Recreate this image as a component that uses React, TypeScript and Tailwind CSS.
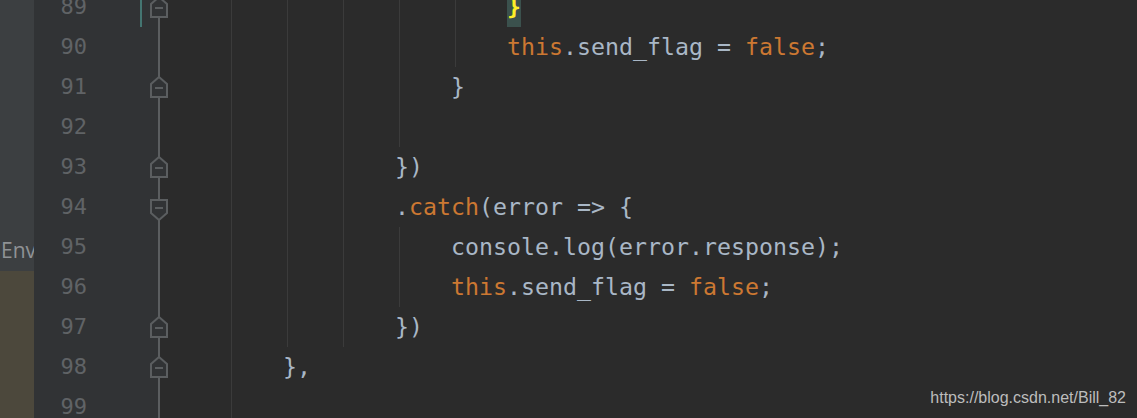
import React from "react";

type Tok = { t: string; k?: "kw" | "brace" };
type Row = {
  n: number;
  indent?: number;
  toks?: Tok[];
  guides: number[];
  fold?: "end" | "start";
  change?: boolean;
};

const rows: Row[] = [
  { n: 89, indent: 20, toks: [{ t: "}", k: "brace" }], guides: [0, 1, 2, 3, 4], fold: "end", change: true },
  {
    n: 90,
    indent: 20,
    toks: [{ t: "this", k: "kw" }, { t: ".send_flag = " }, { t: "false", k: "kw" }, { t: ";" }],
    guides: [0, 1, 2, 3, 4],
  },
  { n: 91, indent: 16, toks: [{ t: "}" }], guides: [0, 1, 2, 3], fold: "end" },
  { n: 92, guides: [0, 1, 2, 3] },
  { n: 93, indent: 12, toks: [{ t: "})" }], guides: [0, 1, 2], fold: "end" },
  {
    n: 94,
    indent: 12,
    toks: [{ t: "." }, { t: "catch", k: "kw" }, { t: "(error => {" }],
    guides: [0, 1, 2],
    fold: "start",
  },
  { n: 95, indent: 16, toks: [{ t: "console.log(error.response);" }], guides: [0, 1, 2, 3] },
  {
    n: 96,
    indent: 16,
    toks: [{ t: "this", k: "kw" }, { t: ".send_flag = " }, { t: "false", k: "kw" }, { t: ";" }],
    guides: [0, 1, 2, 3],
  },
  { n: 97, indent: 12, toks: [{ t: "})" }], guides: [0, 1, 2], fold: "end" },
  { n: 98, indent: 4, toks: [{ t: "}," }], guides: [0], fold: "end" },
  { n: 99, guides: [0] },
];

const guideLeft = ["left-[71px]", "left-[127px]", "left-[183px]", "left-[239px]", "left-[295px]"];

const mono = { fontFamily: '"DejaVu Sans Mono", monospace' };

function FoldMarker({ kind }: { kind: "end" | "start" }) {
  if (kind === "end") {
    return (
      <svg
        className="absolute left-[-8px] top-[9px]"
        width="18"
        height="22"
        viewBox="0 0 18 22"
      >
        <path d="M1 21 V8 L9 1 L17 8 V21 Z" fill="#313335" stroke="#5b5e60" strokeWidth="2" strokeLinejoin="miter" />
        <rect x="5" y="11" width="8" height="2" fill="#5b5e60" />
      </svg>
    );
  }
  return (
    <svg
      className="absolute left-[-8px] top-[12px]"
      width="18"
      height="22"
      viewBox="0 0 18 22"
    >
      <path d="M1 1 H17 V14 L9 21 L1 14 Z" fill="#313335" stroke="#5b5e60" strokeWidth="2" strokeLinejoin="miter" />
      <rect x="5" y="8" width="8" height="2" fill="#5b5e60" />
    </svg>
  );
}

export default function App() {
  return (
    <div className="relative flex h-[418px] w-[1137px] overflow-hidden bg-[#2b2b2b]">
      {/* left tool strip */}
      <div className="flex w-[34px] shrink-0 flex-col overflow-hidden">
        <div className="flex h-[271px] items-end overflow-hidden bg-[#3c3f41] pb-[6px]">
          <span
            className="whitespace-nowrap pl-[1px] text-[21px] leading-[30px] text-[#8f9295]"
            style={{ fontFamily: '"Open Sans", sans-serif' }}
          >
            Env
          </span>
        </div>
        <div className="flex-1 bg-[#4c483c]" />
      </div>

      {/* editor */}
      <div className="flex flex-1 flex-col overflow-hidden">
        <div className="-mt-[13px] flex flex-col" style={mono}>
          {rows.map((r) => (
            <div key={r.n} className="flex h-[40px]">
              <div className="flex w-[124px] shrink-0 bg-[#313335]">
                <span className="w-[53px] text-right text-[22px] leading-[40px] text-[#606366]">{r.n}</span>
                <span className="w-[53px]" />
                <span className={`h-full w-[2px] ${r.change ? "bg-[#447571]" : ""}`} />
              </div>
              <div className="relative w-[2px] shrink-0 bg-[#5b5e60]">
                {r.fold && <FoldMarker kind={r.fold} />}
              </div>
              <div className="relative flex-1 whitespace-pre pl-[67px] text-[23.25px] leading-[40px] text-[#a9b7c6]">
                {r.guides.map((g) => (
                  <span key={g} className={`absolute top-0 h-full w-px bg-[#3b3b3b] ${guideLeft[g]}`} />
                ))}
                <span className="relative">
                  {" ".repeat(r.indent ?? 0)}
                  {(r.toks ?? []).map((t, i) =>
                    t.k === "kw" ? (
                      <span key={i} className="text-[#cc7832]">
                        {t.t}
                      </span>
                    ) : t.k === "brace" ? (
                      <span key={i} className="inline-block h-[40px] bg-[#3b514d] align-top font-bold text-[#ffef28]">
                        {t.t}
                      </span>
                    ) : (
                      <span key={i}>{t.t}</span>
                    )
                  )}
                </span>
              </div>
            </div>
          ))}
        </div>
      </div>

      {/* watermark */}
      <span
        className="absolute right-[11px] top-[390px] text-[16px] leading-none text-[#bdbdbd]"
        style={{ fontFamily: '"Liberation Sans", Arial, sans-serif' }}
      >
        https://blog.csdn.net/Bill_82
      </span>
    </div>
  );
}
